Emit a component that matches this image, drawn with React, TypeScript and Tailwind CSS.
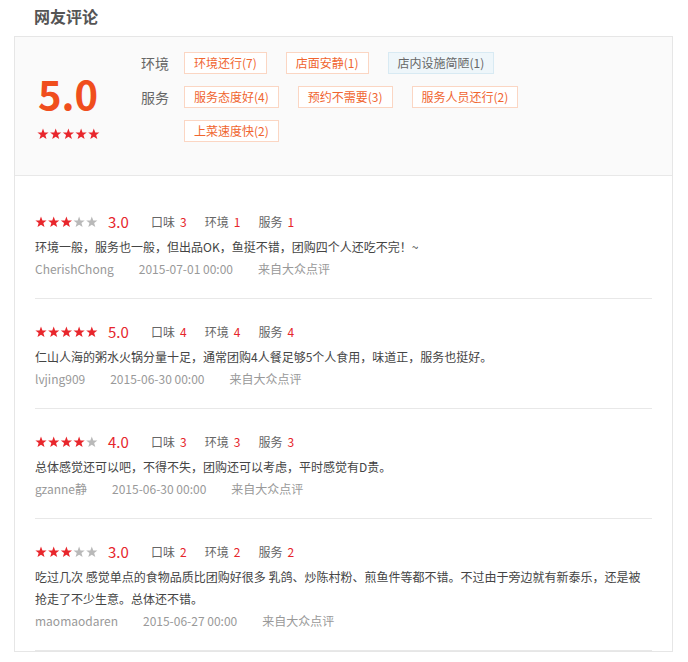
import React from 'react';

interface Review {
  id: string;
  stars: number;
  taste: number;
  env: number;
  service: number;
  text: string;
  user: string;
  date: string;
}

const reviews: Review[] = [
  {
    id: 'r1',
    stars: 3,
    taste: 3,
    env: 1,
    service: 1,
    text: '环境一般，服务也一般，但出品OK，鱼挺不错，团购四个人还吃不完！~',
    user: 'CherishChong',
    date: '2015-07-01 00:00'
  },
  {
    id: 'r2',
    stars: 5,
    taste: 4,
    env: 4,
    service: 4,
    text: '仁山人海的粥水火锅分量十足，通常团购4人餐足够5个人食用，味道正，服务也挺好。',
    user: 'lvjing909',
    date: '2015-06-30 00:00'
  },
  {
    id: 'r3',
    stars: 4,
    taste: 3,
    env: 3,
    service: 3,
    text: '总体感觉还可以吧，不得不失，团购还可以考虑，平时感觉有D贵。',
    user: 'gzanne静',
    date: '2015-06-30 00:00'
  },
  {
    id: 'r4',
    stars: 3,
    taste: 2,
    env: 2,
    service: 2,
    text: '吃过几次 感觉单点的食物品质比团购好很多 乳鸽、炒陈村粉、煎鱼件等都不错。不过由于旁边就有新泰乐，还是被抢走了不少生意。总体还不错。',
    user: 'maomaodaren',
    date: '2015-06-27 00:00'
  }
];

const STAR = '6,0.5 7.45,4.4 11.6,4.55 8.35,7.1 9.5,11.1 6,8.8 2.5,11.1 3.65,7.1 0.4,4.55 4.55,4.4';

const Stars: React.FC<{ count: number }> = ({ count }) => (
  <svg width="63" height="12" viewBox="0 0 63 12" className="block">
    {[0, 1, 2, 3, 4].map((i) => (
      <polygon
        key={i}
        points={STAR}
        transform={`translate(${i * 12.7} 0)`}
        fill={i < count ? '#e8262c' : '#b9b9b9'}
      />
    ))}
  </svg>
);

const Tag: React.FC<{ label: string; blue?: boolean }> = ({ label, blue }) => (
  <span
    className={`h-[22px] px-[9px] flex items-center text-[12px] border ${
      blue
        ? 'bg-[#eef6fa] border-[#d8eaf3] text-[#666]'
        : 'bg-white border-[#fbd6c3] text-[#f0652f]'
    }`}
  >
    {label}
  </span>
);

const Score: React.FC<{ label: string; value: number }> = ({ label, value }) => (
  <span className="flex items-center gap-[5px]">
    <span className="text-[#666]">{label}</span>
    <span className="text-[#e6252b]">{value}</span>
  </span>
);

export default function App() {
  return (
    <div
      className="w-[688px] h-[662px] overflow-hidden bg-white"
      style={{ fontFamily: '"Noto Sans CJK SC", "Noto Sans", sans-serif' }}
    >
      {/* Title */}
      <div className="h-[36px] pl-[34px] pb-[4px] flex items-center text-[16px] font-bold text-[#555]">
        网友评论
      </div>

      <div className="ml-[14px] w-[659px] border border-[#e6e6e6]">
        {/* Summary */}
        <div className="flex bg-[#fafafa] border-b border-[#e8e8e8] pt-[15px] pb-[33px]">
          <div className="w-[106px] flex flex-col items-center pt-[17px]">
            <span className="text-[40px] leading-[48px] font-semibold text-[#f04e1d]">5.0</span>
            <div className="mt-[11px]">
              <Stars count={5} />
            </div>
          </div>
          <div className="ml-[20px] flex flex-col gap-[12px]">
            <div className="flex items-center">
              <span className="w-[43px] text-[14px] text-[#666]">环境</span>
              <div className="flex gap-[19px]">
                <Tag label="环境还行(7)" />
                <Tag label="店面安静(1)" />
                <Tag label="店内设施简陋(1)" blue />
              </div>
            </div>
            <div className="flex items-center">
              <span className="w-[43px] text-[14px] text-[#666]">服务</span>
              <div className="flex gap-[19px]">
                <Tag label="服务态度好(4)" />
                <Tag label="预约不需要(3)" />
                <Tag label="服务人员还行(2)" />
              </div>
            </div>
            <div className="flex items-center">
              <span className="w-[43px]" />
              <Tag label="上菜速度快(2)" />
            </div>
          </div>
        </div>

        {/* Review list */}
        <div className="px-[20px] pt-[13px]">
          {reviews.map((r) => (
            <div key={r.id} className="border-b border-[#e8e8e8] pt-[23px] pb-[18px]">
              <div className="h-[20px] flex items-center text-[12px] mb-[4px]">
                <Stars count={r.stars} />
                <span className="ml-[10px] w-[43px] text-[15px] text-[#e6252b]">{r.stars}.0</span>
                <div className="flex gap-[18px]">
                  <Score label="口味" value={r.taste} />
                  <Score label="环境" value={r.env} />
                  <Score label="服务" value={r.service} />
                </div>
              </div>
              <p className="text-[12px] leading-[22px] text-[#444]">{r.text}</p>
              <div className="flex gap-[25px] text-[12px] leading-[22px] text-[#999]">
                <span>{r.user}</span>
                <span>{r.date}</span>
                <span>来自大众点评</span>
              </div>
            </div>
          ))}
        </div>
      </div>
    </div>
  );
}
